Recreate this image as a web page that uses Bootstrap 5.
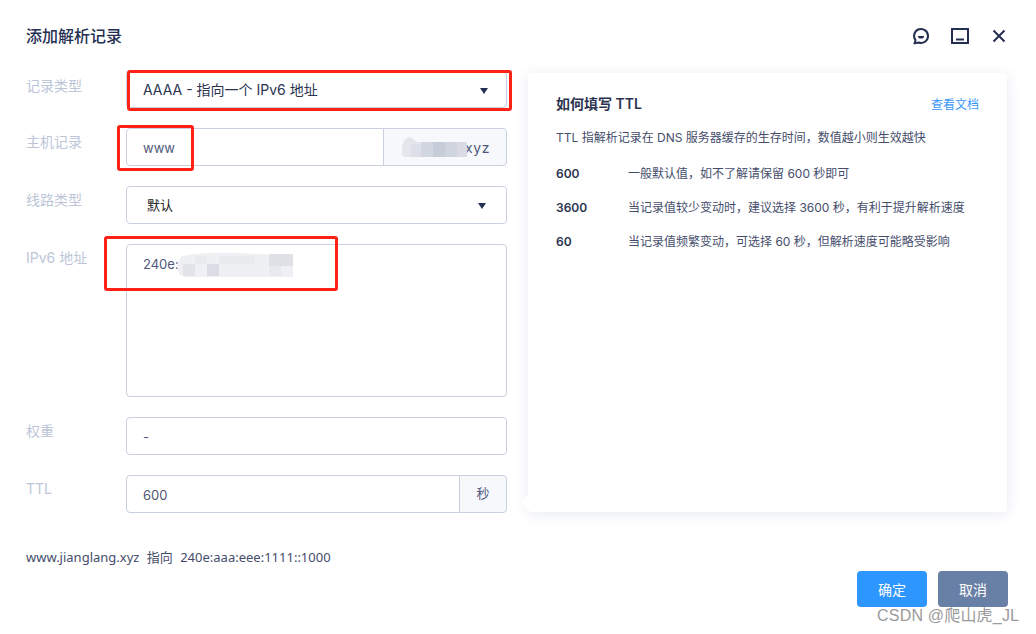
<!DOCTYPE html>
<html lang="zh">
<head>
<meta charset="utf-8">
<title>添加解析记录</title>
<link href="https://cdn.jsdelivr.net/npm/bootstrap@5.3.0/dist/css/bootstrap.min.css" rel="stylesheet">
<style>
html,body{height:634px;overflow:hidden;background:#fff}
body{font-family:Inter,"Noto Sans CJK SC",sans-serif;font-size:14px;color:#2b3350;position:relative}
.dlg{width:1036px;height:634px;position:relative}
.dlg-head{height:70px;padding:2px 28px 0 26px}
.dlg-title{font-size:16px;font-weight:500;color:#252f52;margin:0;line-height:1}
.hd-ico{width:18px;height:18px;display:block}
.dlg-body{padding:0 29px 0 26px;gap:21px}
.frm{width:481px;gap:20px}
.lbl{width:100px;flex:none;color:#bcc6d8;font-size:14px;line-height:28px;margin:0;padding:0}
.lbl-first{margin-top:2px}
.fld{height:38px;border:1px solid #c9d1e0;border-radius:4px;font-size:13px;color:#50587a;padding:1px 16px 0;line-height:35px;box-shadow:none;background-color:#fff}
.fld-sel{font-size:14px;color:#2b3350;background-image:url("data:image/svg+xml,%3Csvg xmlns='http://www.w3.org/2000/svg' viewBox='0 0 8 6'%3E%3Cpath fill='%23252f52' d='M0 0h8L4 6z'/%3E%3C/svg%3E");background-size:8px 6px;background-position:right 18px top 17px;background-repeat:no-repeat}
.fld-sel.indent{padding-left:20px;font-size:13px;color:#222;background-position:right 20px top 16px}
textarea.fld{height:153px;resize:none;line-height:20px;padding-top:9px}
.addon{height:38px;border:1px solid #c9d1e0;background:#f7f8fc;color:#50587a;font-size:14px;padding:0 16px;border-radius:0 4px 4px 0;margin-left:-1px}
.addon-dom{width:124px;justify-content:flex-end;letter-spacing:.6px}
.addon-sec{width:48px;justify-content:center;font-size:13px}
.panel{width:479px;height:439px;margin-top:3px;border-radius:4px;background:#fff;box-shadow:0 2px 14px rgba(90,105,170,.14);padding:20px 28px;position:relative;font-size:12px;color:#454d6b}
.panel::before{content:"";position:absolute;left:-5px;bottom:5px;width:11px;height:11px;background:#fff;transform:rotate(45deg)}
.pn-title{font-size:14px;font-weight:600;color:#2b3350}
.pn-link{font-size:12px;color:#3a97f8;text-decoration:none;padding-top:2px}
.pn-intro{margin:15px 0 0;line-height:18px}
.pn-tbl{margin-top:18px;gap:16px}
.pn-row{line-height:18px}
.pn-key{width:72px;flex:none;font-weight:600;color:#2b3350}
.dlg-foot{position:absolute;left:26px;right:28px;top:571px;height:36px}
.pv{font-family:"Noto Sans","Noto Sans CJK SC",sans-serif;font-size:13px;line-height:20px;color:#454d6b;margin-top:-24px;word-spacing:4px;align-self:flex-start}
.b-ok,.b-no{width:70px;height:36px;border:0;border-radius:4px;color:#fff;font-size:14px;padding:0}
.b-ok{background:#2e96ff}
.b-no{background:#6980a6;margin-left:11px}
.redbox{position:absolute;border:3px solid #fd2116;border-radius:3px;pointer-events:none}
.blur{position:absolute;display:block}
.wm{position:absolute;left:877px;top:605px;font-size:16px;line-height:22px;color:#9a9a9a;font-family:"Liberation Sans","Noto Sans CJK SC",sans-serif;letter-spacing:.2px}
</style>
</head>
<body>
<div class="dlg">
  <div class="dlg-head d-flex align-items-center justify-content-between">
    <h5 class="dlg-title">添加解析记录</h5>
    <div class="d-flex align-items-center" style="gap:21px">
      <svg class="hd-ico" viewBox="0 0 18 18" fill="none" stroke="#252f52" stroke-width="2"><path d="M2.6 16.2 3.5 13.2A7 7 0 1 1 6.6 15.5C5.2 16 4 16.2 2.6 16.2Z"/><path d="M6 9h6a3 2.6 0 0 1-6 0Z" fill="#252f52" stroke="none"/></svg>
      <svg class="hd-ico" viewBox="0 0 18 18" fill="none" stroke="#252f52" stroke-width="2"><rect x="1" y="2" width="16" height="14"/><path d="M5 12.5h8"/></svg>
      <svg class="hd-ico" viewBox="0 0 18 18" fill="none" stroke="#252f52" stroke-width="2"><path d="M3.5 3.5 14.5 14.5M14.5 3.5 3.5 14.5"/></svg>
    </div>
  </div>
  <div class="dlg-body d-flex align-items-start">
    <form class="frm d-flex flex-column">
      <div class="d-flex"><label class="lbl lbl-first">记录类型</label><select class="form-select fld fld-sel"><option>AAAA - 指向一个 IPv6 地址</option></select></div>
      <div class="d-flex"><label class="lbl">主机记录</label><div class="input-group flex-nowrap"><input class="form-control fld" style="border-radius:4px 0 0 4px" value="www"><span class="addon addon-dom d-flex align-items-center">xyz</span></div></div>
      <div class="d-flex"><label class="lbl">线路类型</label><select class="form-select fld fld-sel indent"><option>默认</option></select></div>
      <div class="d-flex"><label class="lbl">IPv6 地址</label><textarea class="form-control fld">240e:</textarea></div>
      <div class="d-flex"><label class="lbl">权重</label><input class="form-control fld" value="-"></div>
      <div class="d-flex"><label class="lbl">TTL</label><div class="input-group flex-nowrap"><input class="form-control fld" style="border-radius:4px 0 0 4px" value="600"><span class="addon addon-sec d-flex align-items-center">秒</span></div></div>
    </form>
    <aside class="panel">
      <div class="d-flex align-items-center justify-content-between"><span class="pn-title">如何填写 TTL</span><a class="pn-link" href="#">查看文档</a></div>
      <p class="pn-intro">TTL 指解析记录在 DNS 服务器缓存的生存时间，数值越小则生效越快</p>
      <div class="pn-tbl d-flex flex-column">
        <div class="pn-row d-flex"><span class="pn-key">600</span><span>一般默认值，如不了解请保留 600 秒即可</span></div>
        <div class="pn-row d-flex"><span class="pn-key">3600</span><span>当记录值较少变动时，建议选择 3600 秒，有利于提升解析速度</span></div>
        <div class="pn-row d-flex"><span class="pn-key">60</span><span>当记录值频繁变动，可选择 60 秒，但解析速度可能略受影响</span></div>
      </div>
    </aside>
  </div>
  <div class="dlg-foot d-flex justify-content-between">
    <div class="pv">www.jianglang.xyz 指向 240e:aaa:eee:1111::1000</div>
    <div class="d-flex"><button type="button" class="btn b-ok">确定</button><button type="button" class="btn b-no">取消</button></div>
  </div>

  <svg class="blur" style="left:401px;top:135px" width="66" height="22" viewBox="0 0 66 22"><path fill="#e4e6ed" d="M1 12Q3 2 9 2L16 7H66V22H4Q0 21 1 16Z"/><rect x="10" y="9" width="10" height="13" fill="#dcdfe8"/><rect x="20" y="7" width="12" height="15" fill="#d2d6e1"/><rect x="32" y="7" width="12" height="15" fill="#c7ccd9"/><rect x="44" y="7" width="12" height="15" fill="#d0d4df"/><rect x="56" y="7" width="10" height="15" fill="#d8dbe4"/></svg>
  <svg class="blur" style="left:177px;top:252px" width="116" height="26" viewBox="0 0 116 26"><path fill="#eff0f3" d="M4 4Q30 0 58 1T108 4Q116 6 116 12V25H8Q1 24 0 14Z"/><rect x="6" y="12" width="12" height="12" fill="#e2e3e9"/><rect x="30" y="12" width="12" height="12" fill="#dcdde4"/><rect x="18" y="4" width="12" height="8" fill="#e9eaee"/><rect x="42" y="4" width="36" height="8" fill="#e9eaee"/><rect x="92" y="2" width="24" height="12" fill="#e0e1e7"/><rect x="92" y="14" width="12" height="10" fill="#e8e9ed"/></svg>

  <div class="redbox" style="left:127px;top:70px;width:385px;height:41px"></div>
  <div class="redbox" style="left:117px;top:125px;width:77px;height:46px"></div>
  <div class="redbox" style="left:104px;top:236px;width:234px;height:55px"></div>
  <div class="wm">CSDN @爬山虎_JL</div>
</div>
<script src="https://cdn.jsdelivr.net/npm/bootstrap@5.3.0/dist/js/bootstrap.bundle.min.js"></script>
</body>
</html>
